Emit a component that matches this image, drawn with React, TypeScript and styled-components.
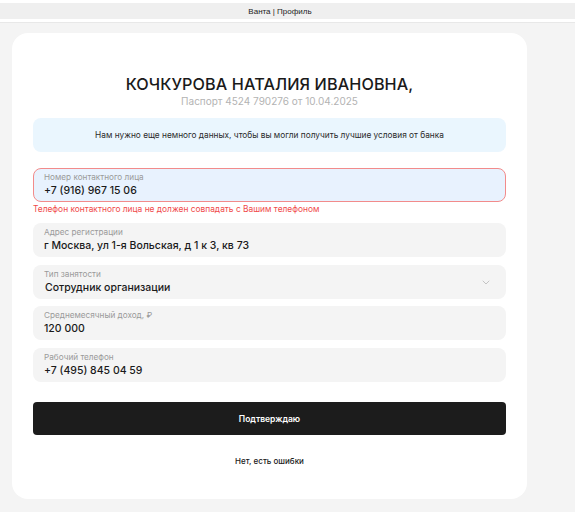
import styled, { createGlobalStyle } from 'styled-components';

const GlobalStyle = createGlobalStyle`
  html, body {
    margin: 0;
    padding: 0;
    background: #f4f4f4;
    font-family: Inter, "Noto Sans", sans-serif;
  }
`;

interface IField {
  label: string;
  value: string;
  error?: string;
  select?: boolean;
}

const fields: IField[] = [
  {
    label: 'Номер контактного лица',
    value: '+7 (916) 967 15 06',
    error: 'Телефон контактного лица не должен совпадать с Вашим телефоном',
  },
  { label: 'Адрес регистрации', value: 'г Москва, ул 1-я Вольская, д 1 к 3, кв 73' },
  { label: 'Тип занятости', value: 'Сотрудник организации', select: true },
  { label: 'Среднемесячный доход, ₽', value: '120 000' },
  { label: 'Рабочий телефон', value: '+7 (495) 845 04 59' },
];

const App = () => {
  return (
    <>
      <GlobalStyle />
      <Header>
        <TopBar>Ванта | Профиль</TopBar>
      </Header>
      <Main>
        <Card>
          <Title>КОЧКУРОВА НАТАЛИЯ ИВАНОВНА,</Title>
          <Passport>Паспорт 4524 790276 от 10.04.2025</Passport>
          <Notice>Нам нужно еще немного данных, чтобы вы могли получить лучшие условия от банка</Notice>
          <Form>
            {fields.map(field => (
              <FieldWrapper key={field.label}>
                <Field hasError={!!field.error}>
                  <FieldLabel>{field.label}</FieldLabel>
                  <FieldValue select={field.select}>{field.value}</FieldValue>
                  {field.select && (
                    <Chevron width="8" height="5" viewBox="0 0 8 5">
                      <path d="M1 1l3 3 3-3" fill="none" stroke="#c4c4c4" strokeWidth="1" strokeLinecap="round" />
                    </Chevron>
                  )}
                </Field>
                {field.error && <ErrorText>{field.error}</ErrorText>}
              </FieldWrapper>
            ))}
          </Form>
          <ConfirmButton>Подтверждаю</ConfirmButton>
          <SecondaryButton>Нет, есть ошибки</SecondaryButton>
        </Card>
      </Main>
    </>
  );
};

const Header = styled.header`
  background: #ffffff;
  padding: 3px 0 3px;
  border-bottom: 1px solid #e8e8e8;
`;

const TopBar = styled.div`
  height: 16px;
  padding-right: 15px;
  background: #efefef;
  display: flex;
  align-items: center;
  justify-content: center;
  font-family: "Liberation Sans", Arial, sans-serif;
  font-size: 8px;
  color: #222222;
`;

const Main = styled.main`
  padding: 10px 48px 15px 12px;
`;

const Card = styled.div`
  background: #ffffff;
  border-radius: 16px;
  padding: 41px 21px 32px;
  display: flex;
  flex-direction: column;
  align-items: center;
`;

const Title = styled.h1`
  margin: 0;
  font-size: 16.2px;
  font-weight: 500;
  line-height: 20px;
  color: #1a1a1a;
  letter-spacing: 0.1px;
`;

const Passport = styled.p`
  margin: 0;
  font-size: 10px;
  line-height: 14px;
  color: #b3b3b3;
`;

const Notice = styled.div`
  align-self: stretch;
  margin-top: 10px;
  height: 34px;
  border-radius: 8px;
  background: #eaf6fe;
  display: flex;
  align-items: center;
  justify-content: center;
  font-size: 8.3px;
  color: #2a2a2a;
`;

const Form = styled.div`
  align-self: stretch;
  margin-top: 16px;
  display: flex;
  flex-direction: column;
  gap: 7.5px;
`;

const FieldWrapper = styled.div`
  display: flex;
  flex-direction: column;
`;

const Field = styled.div<{ hasError: boolean }>`
  position: relative;
  box-sizing: border-box;
  height: 34px;
  padding: 3px 10px 0;
  border-radius: 8px;
  border: 1px solid ${({ hasError }) => (hasError ? '#f28b8b' : 'transparent')};
  background: ${({ hasError }) => (hasError ? '#e8f2fe' : '#f4f4f4')};
`;

const FieldLabel = styled.div`
  font-size: 8.2px;
  line-height: 10px;
  color: #9a9a9a;
`;

const FieldValue = styled.div<{ select?: boolean }>`
  margin-top: 2px;
  padding-left: ${({ select }) => (select ? '1px' : '0')};
  font-size: 10.5px;
  line-height: 13px;
  font-weight: 500;
  color: #1a1a1a;
`;

const Chevron = styled.svg`
  position: absolute;
  right: 15px;
  top: 14px;
`;

const ErrorText = styled.div`
  margin: 2px 0 1.5px;
  font-size: 8.4px;
  line-height: 10px;
  color: #f04a4a;
`;

const ConfirmButton = styled.button`
  align-self: stretch;
  margin-top: 20.5px;
  height: 33px;
  border: none;
  border-radius: 4px;
  background: #1c1c1c;
  color: #ffffff;
  font-family: Inter, "Noto Sans", sans-serif;
  font-size: 8.5px;
  font-weight: 600;
  cursor: pointer;
`;

const SecondaryButton = styled.button`
  margin-top: 20px;
  border: none;
  background: none;
  color: #1a1a1a;
  font-family: Inter, "Noto Sans", sans-serif;
  font-size: 8px;
  font-weight: 500;
  cursor: pointer;
`;

export default App;
